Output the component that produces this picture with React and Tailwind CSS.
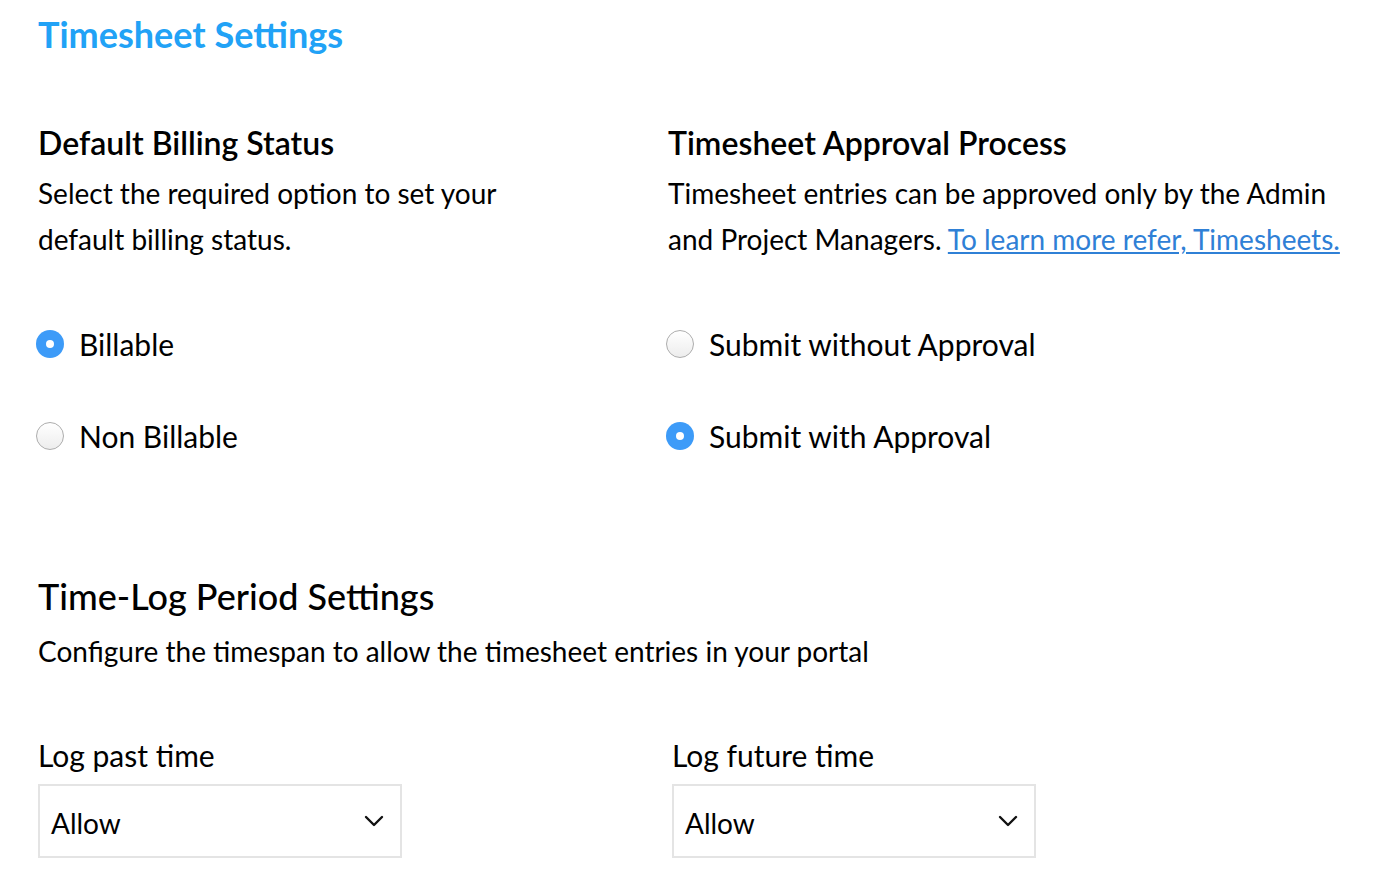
import React, { useState } from "react";

const font = { fontFamily: "Lato, 'Noto Sans', sans-serif" };

function Radio({ checked, label, onClick }) {
  return (
    <button onClick={onClick} className="flex items-center h-[46px] text-left">
      {checked ? (
        <span className="w-[28px] h-[28px] rounded-full bg-[#3d9bf8] flex items-center justify-center shrink-0 -ml-[2px]">
          <span className="w-[8px] h-[8px] rounded-full bg-white" />
        </span>
      ) : (
        <span className="w-[28px] h-[28px] rounded-full border border-[#adadad] bg-gradient-to-b from-white to-[#ededed] shrink-0 -ml-[2px]" />
      )}
      <span className="ml-[15px] text-[30px] text-black">{label}</span>
    </button>
  );
}

function Chevron() {
  return (
    <svg width="20" height="12" viewBox="0 0 20 12" fill="none">
      <path d="M2 2 L10 10 L18 2" stroke="#111" strokeWidth="2.4" strokeLinecap="round" strokeLinejoin="round" />
    </svg>
  );
}

function Dropdown({ label }) {
  return (
    <div>
      <div className="text-[30px] text-black leading-[40px]">{label}</div>
      <div className="mt-[9px] w-[364px] h-[74px] border-2 border-[#e4e4e4] flex items-center justify-between pl-[11px] pr-[16px]">
        <span className="text-[28px] text-black pt-[4px]">Allow</span>
        <Chevron />
      </div>
    </div>
  );
}

export default function App() {
  const [billing, setBilling] = useState("billable");
  const [approval, setApproval] = useState("with");

  return (
    <div className="bg-white min-h-[884px] px-[38px] pt-[11px]" style={font}>
      <h1 className="text-[36px] font-bold text-[#21a2f6] leading-[46px]">Timesheet Settings</h1>

      <div className="grid grid-cols-[630px_1fr] mt-[64px]">
        <div>
          <h2 className="text-[32px] font-semibold text-black leading-[44px]">Default Billing Status</h2>
          <p className="text-[28px] text-black leading-[46px] mt-[5px] w-[480px]">
            Select the required option to set your default billing status.
          </p>
          <div className="mt-[59px] flex flex-col gap-[46px]">
            <Radio checked={billing === "billable"} label="Billable" onClick={() => setBilling("billable")} />
            <Radio checked={billing === "non"} label="Non Billable" onClick={() => setBilling("non")} />
          </div>
        </div>
        <div className="w-[690px]">
          <h2 className="text-[32px] font-semibold text-black leading-[44px]">Timesheet Approval Process</h2>
          <p className="text-[28px] text-black leading-[46px] mt-[5px]">
            Timesheet entries can be approved only by the Admin and Project Managers.{" "}
            <a href="#" className="text-[#2f80d6] underline">To learn more refer, Timesheets.</a>
          </p>
          <div className="mt-[59px] flex flex-col gap-[46px]">
            <Radio checked={approval === "without"} label="Submit without Approval" onClick={() => setApproval("without")} />
            <Radio checked={approval === "with"} label="Submit with Approval" onClick={() => setApproval("with")} />
          </div>
        </div>
      </div>

      <h2 className="text-[36px] font-medium text-black leading-[46px] mt-[114px]">Time-Log Period Settings</h2>
      <p className="text-[28px] text-black leading-[40px] mt-[12px]">
        Configure the timespan to allow the timesheet entries in your portal
      </p>

      <div className="grid grid-cols-[634px_1fr] mt-[64px]">
        <Dropdown label="Log past time" />
        <Dropdown label="Log future time" />
      </div>
    </div>
  );
}
